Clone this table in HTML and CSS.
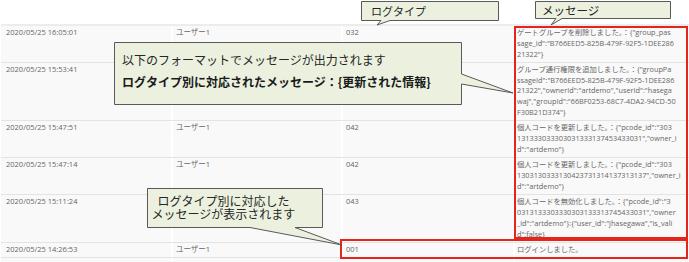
FILE: index.html
```html
<!DOCTYPE html>
<html lang="ja">
<head>
<meta charset="utf-8">
<link rel="stylesheet" href="styles.css">
</head>
<body>
<div class="page">
  <div class="log-table">
    <div class="row">
      <div class="cell c-date"><span>2020/05/25 16:05:01</span></div>
      <div class="cell"><span>ユーザー1</span></div>
      <div class="cell"><span>032</span></div>
      <div class="cell msg"><span>ゲートグループを削除しました。：{"group_pas</span><span>sage_id":"B766EED5-825B-479F-92F5-1DEE286</span><span>21322"}</span></div>
    </div>
    <div class="row">
      <div class="cell c-date"><span>2020/05/25 15:53:41</span></div>
      <div class="cell"></div>
      <div class="cell"></div>
      <div class="cell msg"><span>グループ通行権限を追加しました。：{"groupPa</span><span>ssageId":"B766EED5-825B-479F-92F5-1DEE286</span><span>21322","ownerId":"artdemo","userId":"hasega</span><span>waj","groupId":"66BF0253-68C7-4DA2-94CD-50</span><span>F30B21D374"}</span></div>
    </div>
    <div class="row">
      <div class="cell c-date"><span>2020/05/25 15:47:51</span></div>
      <div class="cell"><span>ユーザー1</span></div>
      <div class="cell"><span>042</span></div>
      <div class="cell msg"><span>個人コードを更新しました。：{"pcode_id":"303</span><span>131333033303031333137453433031","owner_i</span><span>d":"artdemo"}</span></div>
    </div>
    <div class="row">
      <div class="cell c-date"><span>2020/05/25 15:47:14</span></div>
      <div class="cell"><span>ユーザー1</span></div>
      <div class="cell"><span>042</span></div>
      <div class="cell msg"><span>個人コードを更新しました。：{"pcode_id":"303</span><span>1303130333130423731314137313137","owner_i</span><span>d":"artdemo"}</span></div>
    </div>
    <div class="row">
      <div class="cell c-date"><span>2020/05/25 15:11:24</span></div>
      <div class="cell"></div>
      <div class="cell"><span>043</span></div>
      <div class="cell msg"><span>個人コードを無効化しました。：{"pcode_id":"3</span><span>0313133303330303133313745433031","owner</span><span>_id":"artdemo"}:{"user_id":"jhasegawa","is_vali</span><span>d":false}</span></div>
    </div>
    <div class="row">
      <div class="cell c-date"><span>2020/05/25 14:26:53</span></div>
      <div class="cell"><span>ユーザー1</span></div>
      <div class="cell"><span>001</span></div>
      <div class="cell msg"><span>ログインしました。</span></div>
    </div>
    <div class="row">
      <div class="cell c-date"><span></span></div>
      <div class="cell"></div>
      <div class="cell"></div>
      <div class="cell msg"></div>
    </div>
  </div>

  <div class="hl hl-msg"></div>
  <div class="hl hl-login"></div>

  <div class="callout co-type">
    <svg width="138" height="20" viewBox="0 0 138 20"><path d="M0.5,0.5 H137.5 V19.5 H29 L16,24 L20,19.5 H0.5 Z"/></svg>
    <div class="txt">ログタイプ</div>
  </div>

  <div class="callout co-msg">
    <svg width="136" height="18" viewBox="0 0 136 18"><path d="M0.5,0.5 H135.5 V17.5 H27 L16,24 L21,17.5 H0.5 Z"/></svg>
    <div class="txt">メッセージ</div>
  </div>

  <div class="callout co-format">
    <svg width="348" height="63" viewBox="0 0 348 63"><path d="M0.5,0.5 H347.5 V32 L399,51 L347.5,42 V62.5 H0.5 Z"/></svg>
    <div class="txt">
      <p>以下のフォーマットでメッセージが出力されます</p>
      <p class="strong">ログタイプ別に対応されたメッセージ：{更新された情報}</p>
    </div>
  </div>

  <div class="callout co-shown">
    <svg width="176" height="40" viewBox="0 0 176 40"><path d="M0.5,0.5 H175.5 V39.5 H148 L195,57 L103,39.5 H0.5 Z"/></svg>
    <div class="txt"><p>ログタイプ別に対応した</p><p>メッセージが表示されます</p></div>
  </div>
</div>
</body>
</html>
```

FILE: styles.css
```css
html, body {
  margin: 0;
  padding: 0;
  background: #ffffff;
  overflow: hidden;
}

.page {
  position: relative;
  width: 689px;
  height: 262px;
  overflow: hidden;
}

.log-table {
  margin: 24px 0 0 1px;
  border-top: 2px solid #ececec;
  font-family: "Open Sans", "Noto Sans CJK JP", sans-serif;
  font-size: 7.5px;
  line-height: 10.8px;
  color: #666666;
}

.row {
  display: grid;
  grid-template-columns: 170px 168px 170px 1fr;
  column-gap: 2px;
  background: #ffffff;
  border-bottom: 1px solid #e3e3e3;
}

.cell {
  background: #f9f9f9;
  padding: 1px 3px 2.5px 3px;
  white-space: nowrap;
  overflow: hidden;
  min-height: 10.8px;
}

.cell span {
  display: block;
  height: 10.8px;
}

.c-date {
  padding-left: 5px;
}

.msg {
  padding-left: 2px;
  font-size: 7.3px;
}

/* red highlight frames */
.hl {
  position: absolute;
  border: 2px solid #e5241c;
  box-sizing: border-box;
}

.hl-msg {
  left: 514px;
  top: 26px;
  width: 174px;
  height: 213px;
}

.hl-login {
  left: 340px;
  top: 239px;
  width: 348px;
  height: 20px;
}

/* callouts */
.callout {
  position: absolute;
  font-family: "Noto Sans CJK JP", "Noto Sans", sans-serif;
  color: #262626;
}

.callout svg {
  position: absolute;
  left: 0;
  top: 0;
  overflow: visible;
}

.callout svg path {
  fill: #ebf1de;
  stroke: #595959;
  stroke-width: 1;
}

.callout .txt {
  position: relative;
  white-space: nowrap;
}

.callout p {
  margin: 0;
}

.co-type {
  left: 361px;
  top: 1px;
  width: 138px;
  height: 20px;
}

.co-type .txt {
  padding-left: 10px;
  font-size: 11px;
  line-height: 20px;
}

.co-msg {
  left: 535px;
  top: 1px;
  width: 136px;
  height: 18px;
}

.co-msg .txt {
  padding-left: 7px;
  font-size: 11.5px;
  line-height: 18px;
}

.co-format {
  left: 114px;
  top: 42px;
  width: 348px;
  height: 63px;
}

.co-format .txt {
  padding: 7px 0 0 8px;
  font-size: 12px;
  line-height: 21.5px;
}

.co-format .strong {
  font-weight: 700;
  color: #1a1a1a;
}

.co-shown {
  left: 147px;
  top: 188px;
  width: 176px;
  height: 40px;
}

.co-shown .txt {
  padding: 6px 24px 0 1px;
  text-align: center;
  font-size: 12px;
  line-height: 13px;
}

.co-shown p {
  height: 13px;
}
```
